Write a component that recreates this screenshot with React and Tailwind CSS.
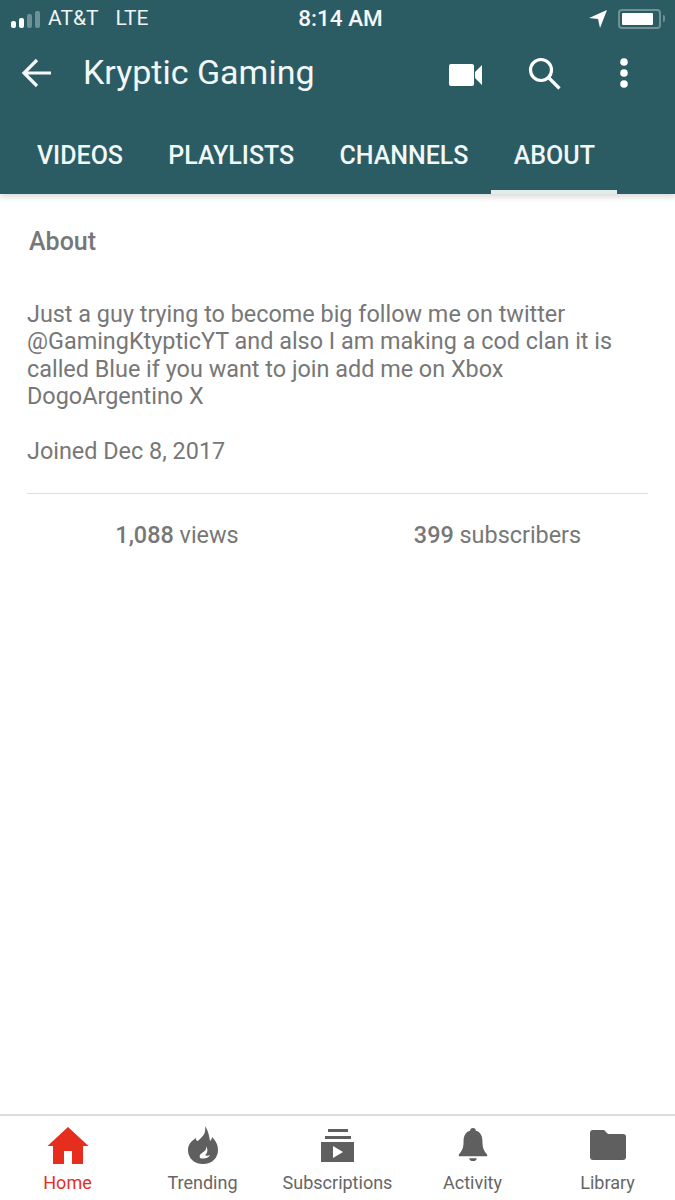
import React from 'react';

const Tab = ({ label, active }) => (
  <div className="relative flex h-full items-center px-[22.6px] pt-[7px]">
    <span className="text-[25px] font-medium leading-none text-[#f2f7f7]">{label}</span>
    {active && <div className="absolute inset-x-0 bottom-0 h-[4px] bg-[#e3eced]" />}
  </div>
);

const NavItem = ({ label, active, children }) => (
  <div className="flex flex-1 flex-col items-center">
    <div className="flex h-[40px] w-[44px] items-center justify-center">{children}</div>
    <span className={`mt-[7px] text-[18px] leading-[22px] ${active ? 'text-[#e62e1f]' : 'text-[#666666]'}`}>{label}</span>
  </div>
);

const App = () => {
  return (
    <div className="flex h-[1200px] w-[675px] flex-col overflow-hidden bg-white font-['Roboto',sans-serif]">
      {/* Header */}
      <header className="h-[194px] shrink-0 bg-[#2b5c63] text-white shadow-[0_3px_6px_rgba(0,0,0,0.15)]">
        <div className="flex h-[37px] items-center justify-between px-[10px]">
          <div className="flex w-[250px] items-center pl-[1px]">
            <div className="flex items-end gap-[3px] pt-[1px]">
              <div className="h-[7px] w-[5px] rounded-[2px] bg-white" />
              <div className="h-[10px] w-[5px] rounded-[2px] bg-white" />
              <div className="h-[14px] w-[5px] rounded-[2px] bg-[#6e9196]" />
              <div className="h-[17px] w-[5px] rounded-[2px] bg-[#6e9196]" />
            </div>
            <span className="ml-[8px] text-[21px] leading-none text-[#eef4f4]">AT&amp;T</span>
            <span className="ml-[17px] text-[21px] leading-none text-[#eef4f4]">LTE</span>
          </div>
          <span className="ml-[6px] text-[22.5px] font-medium leading-none text-[#f5f8f8]">8:14 AM</span>
          <div className="flex w-[250px] items-center justify-end gap-[11px]">
            <svg width="18" height="18" viewBox="0 0 18 18" fill="#fff"><path d="M0 8 18 0l-7 18-2-9z" /></svg>
            <div className="flex items-center">
              <div className="h-[20px] w-[43px] rounded-[4px] border-2 border-[#6e9196] p-[2px]">
                <div className="h-full w-[31px] rounded-[1px] bg-white" />
              </div>
              <div className="ml-[2px] h-[7px] w-[2px] rounded-r-full bg-[#6e9196]" />
            </div>
          </div>
        </div>
        <div className="flex h-[72px] items-center">
          <svg className="ml-[21px]" width="30" height="30" viewBox="0 0 30 30" fill="none" stroke="#f5f8f8" strokeWidth="3.2"><path d="M30 15H3M16 2 3 15l13 13" /></svg>
          <h1 className="mb-[3px] ml-[32px] flex-1 text-[34px] font-normal leading-none text-[#f2f7f7]">Kryptic Gaming</h1>
          <svg className="mr-[45px] mt-[3px]" width="34" height="24" viewBox="0 0 34 24" fill="#fff"><path d="M2 1h21a2 2 0 0 1 2 2v18a2 2 0 0 1-2 2H2a2 2 0 0 1-2-2V3a2 2 0 0 1 2-2zM26 9l7-7v20l-7-7z" /></svg>
          <svg className="mr-[58px]" width="33" height="33" viewBox="0 0 33 33" fill="none" stroke="#fff" strokeWidth="3.2"><circle cx="13" cy="13" r="10.500" /><path d="m20.500 20.500 11 11" /></svg>
          <svg className="mr-[46px]" width="10" height="30" viewBox="0 0 10 30" fill="#fff"><circle cx="5" cy="4" r="3.800" /><circle cx="5" cy="15" r="3.800" /><circle cx="5" cy="26" r="3.800" /></svg>
        </div>
        <div className="flex h-[85px] items-center pl-[14.4px]">
          <Tab label="VIDEOS" />
          <Tab label="PLAYLISTS" />
          <Tab label="CHANNELS" />
          <Tab label="ABOUT" active />
        </div>
      </header>

      {/* About */}
      <main className="flex-1 px-[27px] text-[#777777]">
        <h2 className="ml-[2px] mt-[33px] text-[25px] font-medium leading-[30px]">About</h2>
        <p className="mt-[44px] text-[23.4px] leading-[27.3px]">
          Just a guy trying to become big follow me on twitter<br />
          @GamingKtypticYT and also I am making a cod clan it is<br />
          called Blue if you want to join add me on Xbox<br />
          DogoArgentino X
        </p>
        <p className="mt-[27px] text-[23.4px] leading-[28px]">Joined Dec 8, 2017</p>
        <div className="mt-[28px] h-px w-[621px] bg-[#dddddd]" />
        <div className="flex h-[82px] items-center text-[23.4px]">
          <div className="w-[300px] text-center"><span className="font-medium">1,088</span> views</div>
          <div className="w-[321px] pl-[20px] text-center"><span className="font-medium">399</span> subscribers</div>
        </div>
      </main>

      {/* Bottom nav */}
      <nav className="flex h-[86px] shrink-0 border-t-2 border-[#dcdcdc] bg-white pt-[9px]">
        <NavItem label="Home" active>
          <svg width="42" height="37" viewBox="0 0 42 37" fill="#e62e1f"><path d="M21 0 41.500 19H36v18H25V24h-8v13H6V19H.5z" /></svg>
        </NavItem>
        <NavItem label="Trending">
          <svg width="30" height="38" viewBox="0 0 30 38" fill="#5f5f5f"><path fillRule="evenodd" d="M17 0c1 6-1 9-4 12-2 2-3 3-4 3-1-1-1-2-1-3C3 15 0 19 0 24c0 8 6 14 15 14s15-6 15-14c0-6-3-10-6-13 0 2-1 3-2 4C21 9 20 4 17 0zm1 20c1 3-1 5-4 7-2 1-3 3-2 5 3 1 8 1 10-3-2 1-4 1-5 0 3-2 3-6 1-9z" /></svg>
        </NavItem>
        <NavItem label="Subscriptions">
          <svg width="33" height="33" viewBox="0 0 33 33" fill="#5f5f5f"><path fillRule="evenodd" d="M7 0h20v3H7zM4 7h26v3H4zM0 13h33v20H0zm12 4v12l10-6z" /></svg>
        </NavItem>
        <NavItem label="Activity">
          <svg width="30" height="34" viewBox="0 0 30 36" fill="#5f5f5f"><path d="M15 0c2 0 3 1 3 3 5 1 7 6 7 11 0 6 1 10 5 14v2H0v-2c4-4 5-8 5-14 0-5 2-10 7-11 0-2 1-3 3-3zM11 32h8c0 2-2 3-4 3s-4-1-4-3z" /></svg>
        </NavItem>
        <NavItem label="Library">
          <svg width="36" height="30" viewBox="0 0 36 30" fill="#5f5f5f"><path d="M3 0h11l4 4h15a3 3 0 0 1 3 3v20a3 3 0 0 1-3 3H3a3 3 0 0 1-3-3V3a3 3 0 0 1 3-3z" /></svg>
        </NavItem>
      </nav>
    </div>
  );
};

export default App;
